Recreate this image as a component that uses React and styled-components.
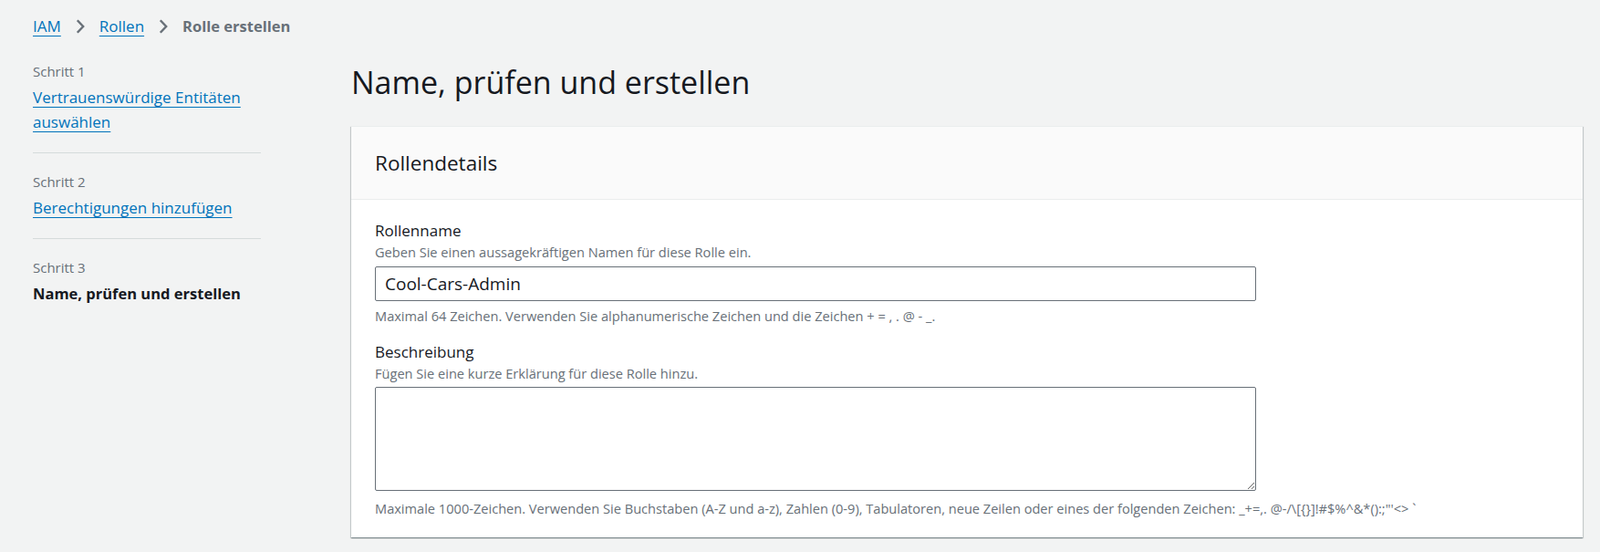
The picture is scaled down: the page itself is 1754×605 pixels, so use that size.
import React from 'react'
import styled, { createGlobalStyle } from 'styled-components'

const GlobalStyle = createGlobalStyle`
  body {
    margin: 0;
    background: #f2f3f3;
    font-family: 'Open Sans', 'Noto Sans', sans-serif;
    color: #16191f;
  }
`

const Page = styled.div`
  padding: 16px 19px 16px 36px;
`

const Breadcrumbs = styled.nav`
  display: flex;
  align-items: center;
  gap: 16px;
  height: 26px;
  font-size: 17px;
  line-height: 26px;
`

const Crumb = styled.a`
  color: ${(p) => (p.current ? '#687078' : '#0073bb')};
  font-weight: ${(p) => (p.current ? 700 : 400)};
  font-size: ${(p) => (p.current ? '16.5px' : '17px')};
  text-decoration: ${(p) => (p.current ? 'none' : 'underline')};
  text-underline-offset: 4px;
`

const Layout = styled.div`
  display: grid;
  grid-template-columns: 250px 1fr;
  column-gap: 99px;
`

const Steps = styled.ol`
  list-style: none;
  margin: 26px 0 0;
  padding: 0;
`

const Step = styled.li`
  padding: 21px 0 20px;
  border-bottom: 1px solid #d5dbdb;

  &:first-child {
    padding-top: 0;
  }
  &:last-child {
    border-bottom: none;
  }
`

const StepNumber = styled.div`
  font-size: 15px;
  line-height: 20px;
  color: #687078;
  margin-bottom: 5px;
`

const StepLink = styled.a`
  font-size: 17px;
  line-height: 27px;
  color: #0073bb;
  text-decoration: underline;
  text-underline-offset: 4px;
`

const StepCurrent = styled.div`
  font-size: 16.5px;
  line-height: 27px;
  font-weight: 700;
`

const Main = styled.main`
  min-width: 0;
`

const Title = styled.h1`
  margin: 28px 0 28px;
  font-size: 34px;
  line-height: 40px;
  font-weight: 400;
`

const Card = styled.section`
  background: #fff;
  border-top: 1px solid #eaeded;
  box-shadow: 0 1px 1px 0 rgba(0, 28, 36, 0.3), 1px 1px 1px 0 rgba(0, 28, 36, 0.15),
    -1px 1px 1px 0 rgba(0, 28, 36, 0.15);
`

const CardHeader = styled.header`
  display: flex;
  align-items: center;
  height: 79px;
  padding: 0 26px;
  background: #fafafa;
  border-bottom: 1px solid #eaeded;
`

const CardTitle = styled.h2`
  margin: 0;
  font-size: 22.5px;
  font-weight: 400;
`

const CardBody = styled.div`
  padding: 22px 26px 22px;
`

const Field = styled.div`
  & + & {
    margin-top: 18px;
  }
`

const Label = styled.label`
  display: block;
  font-size: 17px;
  line-height: 24px;
`

const Description = styled.div`
  font-size: 14.6px;
  line-height: 22px;
  color: #687078;
`

const Input = styled.input`
  display: block;
  box-sizing: border-box;
  width: 966px;
  height: 38px;
  margin-top: 5px;
  padding: 0 10px;
  border: 1px solid #687078;
  border-radius: 2px;
  font-family: inherit;
  font-size: 19px;
  color: #16191f;
`

const TextArea = styled.textarea`
  display: block;
  box-sizing: border-box;
  width: 966px;
  height: 114px;
  margin-top: 4px;
  padding: 8px 11px;
  border: 1px solid #687078;
  border-radius: 2px;
  font-family: inherit;
  font-size: 16px;
`

const Constraint = styled.div`
  margin-top: ${(p) => p.gap || 6}px;
  font-size: 14.6px;
  line-height: 20px;
  color: #687078;
`

const Chevron = () => (
  <svg width="10" height="16" viewBox="0 0 10 16" fill="none">
    <path d="M1.8 1.2 L8.2 8 L1.8 14.8" stroke="#687078" strokeWidth="2.4" />
  </svg>
)

export default function App() {
  return (
    <Page>
      <GlobalStyle />
      <Breadcrumbs>
        <Crumb href="#">IAM</Crumb>
        <Chevron />
        <Crumb href="#">Rollen</Crumb>
        <Chevron />
        <Crumb current>Rolle erstellen</Crumb>
      </Breadcrumbs>
      <Layout>
        <Steps>
          <Step>
            <StepNumber>Schritt 1</StepNumber>
            <StepLink href="#">Vertrauenswürdige Entitäten auswählen</StepLink>
          </Step>
          <Step>
            <StepNumber>Schritt 2</StepNumber>
            <StepLink href="#">Berechtigungen hinzufügen</StepLink>
          </Step>
          <Step>
            <StepNumber>Schritt 3</StepNumber>
            <StepCurrent>Name, prüfen und erstellen</StepCurrent>
          </Step>
        </Steps>
        <Main>
          <Title>Name, prüfen und erstellen</Title>
          <Card>
            <CardHeader>
              <CardTitle>Rollendetails</CardTitle>
            </CardHeader>
            <CardBody>
              <Field>
                <Label>Rollenname</Label>
                <Description>Geben Sie einen aussagekräftigen Namen für diese Rolle ein.</Description>
                <Input defaultValue="Cool-Cars-Admin" />
                <Constraint>
                  Maximal 64 Zeichen. Verwenden Sie alphanumerische Zeichen und die Zeichen + = , . @ - _.
                </Constraint>
              </Field>
              <Field>
                <Label>Beschreibung</Label>
                <Description>Fügen Sie eine kurze Erklärung für diese Rolle hinzu.</Description>
                <TextArea />
                <Constraint gap={9}>
                  Maximale 1000-Zeichen. Verwenden Sie Buchstaben (A-Z und a-z), Zahlen (0-9), Tabulatoren, neue
                  Zeilen oder eines der folgenden Zeichen: _+=,. @-/\[{'{}'}]!#$%^&*():;"'&lt;&gt; `
                </Constraint>
              </Field>
            </CardBody>
          </Card>
        </Main>
      </Layout>
    </Page>
  )
}
